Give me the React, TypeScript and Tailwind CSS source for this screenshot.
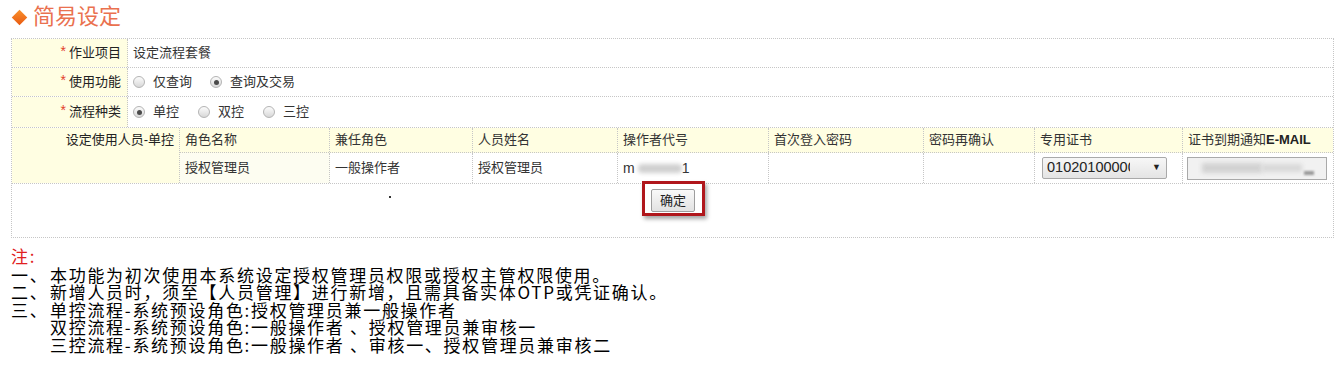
import React from 'react'

const Radio = ({ checked }: { checked?: boolean }) => (
  <span className="inline-flex w-[12px] h-[12px] shrink-0 rounded-full border border-[#b4b4b4] bg-linear-to-b from-[#fcfcfc] to-[#d8d8d8] items-center justify-center">
    {checked && <span className="w-[5px] h-[5px] rounded-full bg-[#4a4a4a]" />}
  </span>
)

const Label = ({ children }: { children: React.ReactNode }) => (
  <div className="w-[116px] shrink-0 bg-[#fffee2] border-r border-dotted border-[#c6c6c6] flex items-center justify-end pr-[6px] text-[#222]">
    <span className="text-[#e2402a] text-[14px] leading-none mr-[3px] -mt-[4px]">*</span>
    {children}
  </div>
)

const cols = [
  { w: 'w-[150px]', head: '角色名称' },
  { w: 'w-[143px]', head: '兼任角色' },
  { w: 'w-[145px]', head: '人员姓名' },
  { w: 'w-[151px]', head: '操作者代号' },
  { w: 'w-[155px]', head: '首次登入密码' },
  { w: 'w-[111px]', head: '密码再确认' },
  { w: 'w-[148px]', head: '专用证书' },
]

const notes = [
  { mark: '一、', lines: ['本功能为初次使用本系统设定授权管理员权限或授权主管权限使用。'] },
  { mark: '二、', lines: ['新增人员时，须至【人员管理】进行新增，且需具备实体OTP或凭证确认。'] },
  {
    mark: '三、',
    lines: [
      '单控流程-系统预设角色:授权管理员兼一般操作者',
      '双控流程-系统预设角色:一般操作者 、授权管理员兼审核一',
      '三控流程-系统预设角色:一般操作者 、审核一、授权管理员兼审核二',
    ],
  },
]

export default function App() {
  return (
    <div className="w-[1342px] h-[374px] bg-white overflow-hidden font-['Liberation_Sans','Noto_Sans_CJK_SC',sans-serif] text-[13px] text-[#333]">
      {/* title */}
      <div className="flex items-center h-[34px]">
        <span className="ml-[14px] w-[11px] h-[11px] rotate-45 bg-linear-to-br from-[#f8902c] to-[#e8580f]" />
        <span className="ml-[8px] text-[22px] leading-none text-[#ea714f]">简易设定</span>
      </div>

      <div className="mt-[4px] ml-[11px] w-[1323px] border border-dotted border-[#c6c6c6]">
        <div className="flex h-[29px] border-b border-dotted border-[#c6c6c6]">
          <Label>作业项目</Label>
          <div className="flex items-center pl-[5px]">设定流程套餐</div>
        </div>
        <div className="flex h-[29px] border-b border-dotted border-[#c6c6c6]">
          <Label>使用功能</Label>
          <div className="flex items-center pl-[5px]">
            <Radio />
            <span className="ml-[8px]">仅查询</span>
            <span className="ml-[18px]" />
            <Radio checked />
            <span className="ml-[8px]">查询及交易</span>
          </div>
        </div>
        <div className="flex h-[31px] border-b border-dotted border-[#c6c6c6]">
          <Label>流程种类</Label>
          <div className="flex items-center pl-[5px]">
            <Radio checked />
            <span className="ml-[8px]">单控</span>
            <span className="ml-[19px]" />
            <Radio />
            <span className="ml-[8px]">双控</span>
            <span className="ml-[19px]" />
            <Radio />
            <span className="ml-[8px]">三控</span>
          </div>
        </div>

        <div className="flex border-b border-dotted border-[#c6c6c6]">
          <div className="w-[168px] shrink-0 bg-[#fffee2] border-r border-dotted border-[#c6c6c6]">
            <div className="h-[24px] flex items-center justify-end pr-[5px] text-[#222]">设定使用人员-单控</div>
          </div>
          <div className="flex-1 flex flex-col">
            <div className="flex h-[25px] border-b border-dotted border-[#c6c6c6] bg-[#fffee2]">
              {cols.map(c => (
                <div key={c.head} className={`${c.w} shrink-0 border-r border-dotted border-[#c6c6c6] flex items-center pl-[5px]`}>
                  {c.head}
                </div>
              ))}
              <div className="flex-1 flex items-center pl-[5px]">
                证书到期通知<b className="text-[#222]">E-MAIL</b>
              </div>
            </div>
            <div className="flex h-[30px]">
              <div className="w-[150px] shrink-0 border-r border-dotted border-[#c6c6c6] bg-[#fdfdf1] flex items-center pl-[5px]">授权管理员</div>
              <div className="w-[143px] shrink-0 border-r border-dotted border-[#c6c6c6] flex items-center pl-[5px]">一般操作者</div>
              <div className="w-[145px] shrink-0 border-r border-dotted border-[#c6c6c6] flex items-center pl-[5px]">授权管理员</div>
              <div className="w-[151px] shrink-0 border-r border-dotted border-[#c6c6c6] flex items-center pl-[5px]">
                <span className="text-[14px]">m</span>
                <span className="ml-[3px] w-[44px] h-[9px] rounded-sm bg-[#cfcfcf] blur-[2px]" />
                <span className="text-[14px]">1</span>
              </div>
              <div className="w-[155px] shrink-0 border-r border-dotted border-[#c6c6c6]" />
              <div className="w-[111px] shrink-0 border-r border-dotted border-[#c6c6c6]" />
              <div className="w-[148px] shrink-0 border-r border-dotted border-[#c6c6c6] flex items-center pl-[7px]">
                <div className="w-[125px] h-[22px] border border-[#a9a9a9] rounded-[2px] bg-linear-to-b from-[#f7f7f7] to-[#e4e4e4] flex items-center pl-[4px] pr-[5px] text-[14.5px] text-[#222]">
                  <span className="w-[83px] overflow-hidden whitespace-nowrap">01020100000</span>
                  <span className="ml-auto text-[9px]">▼</span>
                </div>
              </div>
              <div className="flex-1 flex items-center pl-[4px]">
                <div className="w-[140px] h-[23px] border border-[#a9a9a9] bg-[#f1f1f1] flex items-center pl-[14px]">
                  <span className="w-[60px] h-[10px] bg-[#d2d2d2] blur-[2px]" />
                  <span className="w-[40px] h-[8px] bg-[#d8d8d8] blur-[2px]" />
                  <span className="ml-[2px] w-[10px] h-[4px] mt-[10px] bg-[#9a9a9a] blur-[1px]" />
                </div>
              </div>
            </div>
          </div>
        </div>

        <div className="flex items-start h-[53px]">
          <span className="ml-[377px] mt-[12px] w-[2px] h-[2px] bg-[#333]" />
          <div className="ml-[251px] -mt-[3px] w-[63px] h-[35px] border-[3px] border-[#b0161b] shadow-[2px_3px_4px_rgba(0,0,0,0.35)]">
            <button className="ml-[6px] mt-[5px] w-[44px] h-[23px] border border-[#9d9d9d] rounded-[2px] bg-linear-to-b from-[#f9f9f9] to-[#e2e2e2] text-[13px] text-[#222] flex items-center justify-center">
              确定
            </button>
          </div>
        </div>
      </div>

      {/* notes */}
      <div className="mt-[9px] ml-[11px] text-[17px] leading-[17.5px] tracking-[1.7px] text-black font-['Noto_Sans_CJK_SC',sans-serif]">
        <div className="text-[#e02020] mb-[1px]">注:</div>
        {notes.map(n => (
          <div key={n.mark} className="flex">
            <span className="w-[39px] shrink-0">{n.mark}</span>
            <div>
              {n.lines.map(l => (
                <div key={l} className="whitespace-pre">{l}</div>
              ))}
            </div>
          </div>
        ))}
      </div>
    </div>
  )
}
